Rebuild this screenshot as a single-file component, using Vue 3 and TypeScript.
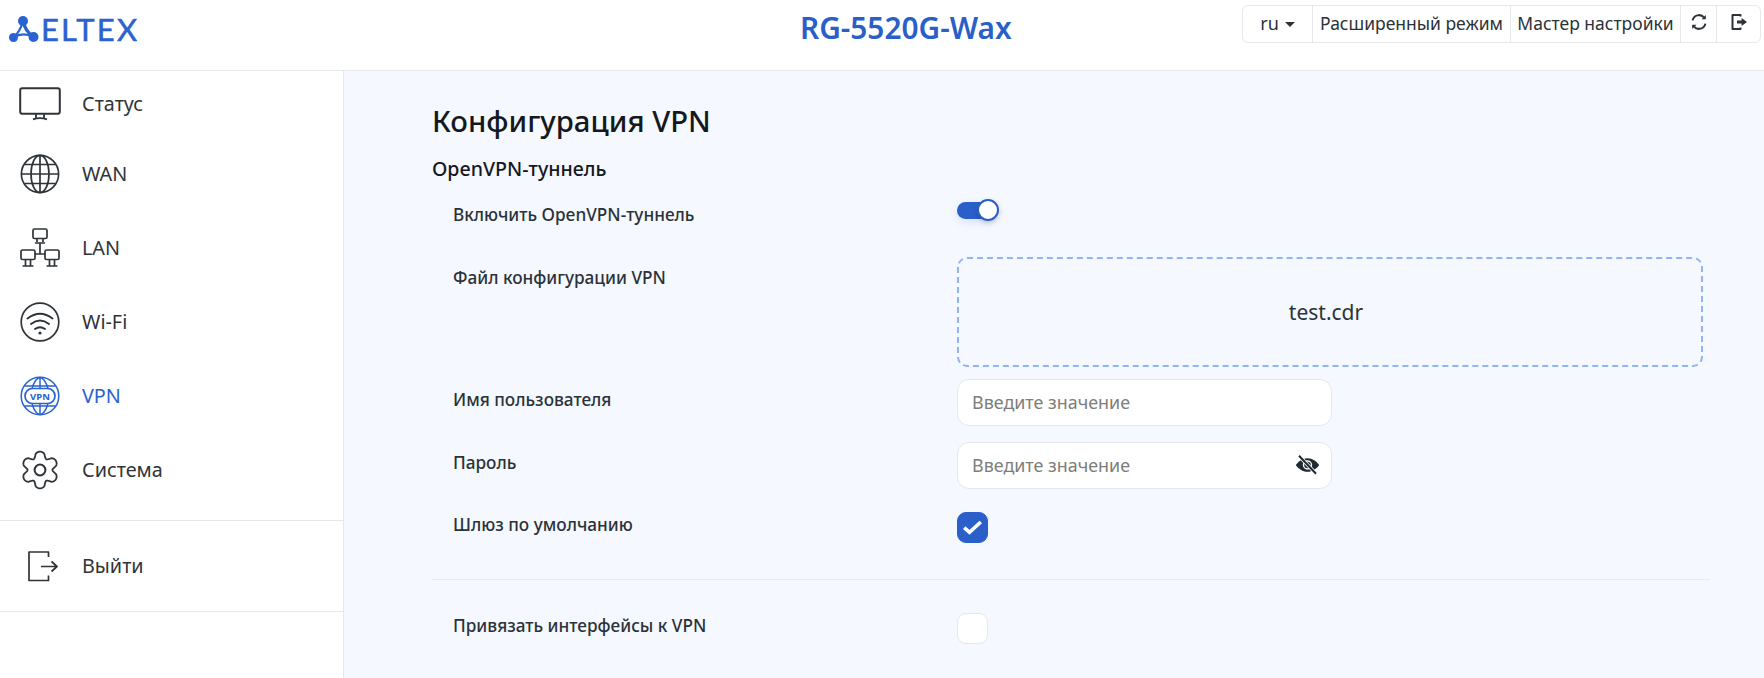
<template>
  <div class="page">
    <header class="topbar">
      <div class="logo">
        <svg class="logo-mark" width="30" height="28" viewBox="0 0 30 28">
          <path d="M14 6Q11 17 4.500 22.500" fill="none" stroke="#2a62cf" stroke-width="2.200" />
          <path d="M14 6Q16 16 24.500 22" fill="none" stroke="#2a62cf" stroke-width="3.400" />
          <path d="M4.500 22.500Q14 16.500 24.500 22" fill="none" stroke="#2a62cf" stroke-width="2.200" />
          <circle cx="14" cy="6" r="5" fill="#2a62cf" />
          <circle cx="4.500" cy="22.500" r="4.500" fill="#2a62cf" />
          <circle cx="24.500" cy="22" r="5" fill="#2a62cf" />
        </svg>
        <span class="logo-text">ELTEX</span>
      </div>
      <div class="device">RG-5520G-Wax</div>
      <div class="btn-group">
        <div class="btn lang">ru <i class="caret"></i></div>
        <div class="btn adv">Расширенный режим</div>
        <div class="btn wizard">Мастер настройки</div>
        <div class="btn ico reload">
          <svg width="18" height="18" viewBox="0 0 18 18" fill="none" stroke="#2b3238" stroke-width="2">
            <path d="M2.600 7.400A6.600 6.600 0 0 1 14 4.400" />
            <path d="M15.400 10.600A6.600 6.600 0 0 1 4 13.600" />
            <path d="M15.800 2v4.300h-4.300z" fill="#2b3238" stroke="none" />
            <path d="M2.200 16v-4.300h4.300z" fill="#2b3238" stroke="none" />
          </svg>
        </div>
        <div class="btn ico leave">
          <svg width="18" height="18" viewBox="0 0 18 18" fill="none">
            <path d="M10.500 3.500V2H2.500v14h8v-1.500" stroke="#2b3238" stroke-width="2" stroke-linejoin="round" />
            <path d="M7 7.600h4.600V4.900L17 9l-5.400 4.100v-2.700H7z" fill="#2b3238" />
          </svg>
        </div>
      </div>
    </header>

    <div class="body">
      <aside class="sidebar">
        <nav class="nav">
          <a class="nav-item">
            <svg class="icon" viewBox="0 0 40 40" fill="none" stroke="currentColor" stroke-width="1.8">
              <rect x="0.2" y="4.2" width="39.6" height="25.6" rx="2" stroke-width="2" />
              <path d="M16 30v4M24 30v4M13 35.4q7-2.4 14 0" />
            </svg>
            <span>Статус</span>
          </a>
          <a class="nav-item">
            <svg class="icon" viewBox="0 0 40 40" fill="none" stroke="currentColor" stroke-width="1.7">
              <circle cx="20" cy="20" r="18.6" />
              <ellipse cx="20" cy="20" rx="9" ry="18.6" />
              <path d="M20 1.4v37.2M1.4 20h37.2M4.4 10.5h31.2M4.4 29.5h31.2" />
            </svg>
            <span>WAN</span>
          </a>
          <a class="nav-item">
            <svg class="icon" viewBox="0 0 40 40" fill="none" stroke="currentColor" stroke-width="1.7">
              <rect x="13" y="1" width="14" height="9.5" rx="1.5" />
              <rect x="1" y="22" width="14" height="9.5" rx="1.5" />
              <rect x="25" y="22" width="14" height="9.5" rx="1.5" />
              <path d="M17 10.5v3.5M23 10.5v3.5M15 15h10M20 15v11M15 26h10" />
              <path d="M5.5 31.5v6M10.5 31.5v6M2.5 38h11M29.5 31.5v6M34.5 31.5v6M26.5 38h11" />
            </svg>
            <span>LAN</span>
          </a>
          <a class="nav-item">
            <svg class="icon" viewBox="0 0 40 40" fill="none" stroke="currentColor" stroke-width="1.7" stroke-linecap="round">
              <circle cx="20" cy="20" r="18.8" />
              <path d="M7.5 16.5q12.500-9.500 25 0M11 22q9-7 18 0M15 27q5-3.600 10 0" stroke-width="1.9" />
              <circle cx="20" cy="31" r="1.6" fill="currentColor" stroke="none" />
            </svg>
            <span>Wi-Fi</span>
          </a>
          <a class="nav-item active">
            <svg class="icon" viewBox="0 0 40 40" fill="none" stroke="currentColor" stroke-width="1.5">
              <circle cx="20" cy="20" r="18.8" />
              <path d="M4.500 10h31M4.500 30h31M20 1.400v11M20 27.500v11" />
              <path d="M12 12.500C14 5.500 17 1.800 20 1.400C23 1.800 26 5.500 28 12.500M12 27.500C14 34.500 17 38.200 20 38.600C23 38.200 26 34.500 28 27.500" />
              <rect x="5" y="12.500" width="30" height="15" rx="7.500" fill="#fff" stroke-width="1.700" />
              <text x="20" y="23.800" text-anchor="middle" class="vpn-mark">VPN</text>
            </svg>
            <span>VPN</span>
          </a>
          <a class="nav-item">
            <svg class="icon" viewBox="0 0 40 40" fill="none" stroke="currentColor" stroke-width="1.8">
              <path :d="gearPath" stroke-linejoin="round" />
              <circle cx="20" cy="20" r="5.400" stroke-width="2" />
            </svg>
            <span>Система</span>
          </a>
        </nav>
        <a class="nav-item exit">
          <svg class="icon" viewBox="0 0 40 40" fill="none" stroke="currentColor" stroke-width="1.7" stroke-linejoin="round">
            <path d="M28.500 11V6H9v28.500h19.500V29.500" />
            <path d="M21 20.500h15.500M31.500 15.500l5.500 5-5.500 5" />
          </svg>
          <span>Выйти</span>
        </a>
      </aside>

      <main class="content">
        <h1 class="title">Конфигурация VPN</h1>
        <h2 class="subtitle">OpenVPN-туннель</h2>

        <div class="row row-toggle">
          <label class="lbl">Включить OpenVPN-туннель</label>
          <div class="toggle"><span class="knob"></span></div>
        </div>

        <div class="row row-file">
          <label class="lbl">Файл конфигурации VPN</label>
          <div class="dropzone">test.cdr</div>
        </div>

        <div class="row row-input">
          <label class="lbl">Имя пользователя</label>
          <div class="field"><input class="input" type="text" placeholder="Введите значение" /></div>
        </div>

        <div class="row row-input row-pass">
          <label class="lbl">Пароль</label>
          <div class="field">
            <input class="input" type="password" placeholder="Введите значение" />
            <svg class="eye" width="25" height="20" viewBox="0 0 25 20">
              <path d="M12.500 3.200c-5 0-9 3-11.700 6.800 2.700 3.800 6.700 6.800 11.700 6.800s9-3 11.700-6.800C21.500 6.200 17.500 3.200 12.500 3.200z" fill="#1f2a30" />
              <circle cx="12.500" cy="10" r="4" fill="none" stroke="#f5f8ff" stroke-width="1.400" />
              <path d="M4 .8l17 18" stroke="#fff" stroke-width="3.600" />
              <path d="M4 .8l17 18" stroke="#1f2a30" stroke-width="2" />
            </svg>
          </div>
        </div>

        <div class="row row-check">
          <label class="lbl">Шлюз по умолчанию</label>
          <div class="check on">
            <svg width="19" height="15" viewBox="0 0 19 15" fill="none">
              <path d="M1.200 7.600l5.300 4.800L17.800 2" stroke="#fff" stroke-width="3.600" />
            </svg>
          </div>
        </div>

        <hr class="sep" />

        <div class="row row-check">
          <label class="lbl">Привязать интерфейсы к VPN</label>
          <div class="check"></div>
        </div>
      </main>
    </div>
  </div>
</template>

<script setup lang="ts">
// gear outline: six rounded lobes with a narrow notch between them
function buildGear(): string {
  const pts: string[] = []
  for (let i = 0; i < 240; i++) {
    const a = (i / 240) * Math.PI * 2
    const c = Math.cos(a * 6)
    const r = 17.2 + 2.6 * (c > -0.2 ? Math.pow((c + 0.2) / 1.2, 0.6) - 0.55 : (c + 0.2) * 1.6 - 0.55)
    const x = 20 + r * Math.sin(a)
    const y = 20 - r * Math.cos(a)
    pts.push(`${x.toFixed(2)} ${y.toFixed(2)}`)
  }
  return `M${pts.join('L')}Z`
}

const gearPath = buildGear()
</script>

<style>
html, body { margin: 0; background: #fff; }
</style>

<style scoped>
.page {
  height: 678px;
  overflow: hidden;
  display: flex;
  flex-direction: column;
  font-family: "Noto Sans", "Open Sans", sans-serif;
  color: #2b3238;
}

.topbar {
  height: 70px;
  flex: none;
  display: grid;
  grid-template-columns: 800px auto 1fr;
  align-items: start;
  background: #fff;
  border-bottom: 1px solid #e6e8ec;
}

.logo {
  display: flex;
  align-items: center;
  gap: 2px;
  padding: 14px 0 0 9px;
}
.logo-text {
  font-family: "Lato", sans-serif;
  font-size: 31px;
  line-height: 30px;
  font-weight: 400;
  letter-spacing: 2.200px;
  color: #2a62cf;
  -webkit-text-stroke: 0.5px #2a62cf;
}

.device {
  font-size: 29.800px;
  line-height: 38px;
  font-weight: 600;
  color: #2a5fc9;
  padding-top: 9px;
}

.btn-group {
  justify-self: end;
  margin: 5px 3px 0 0;
  height: 38px;
  display: flex;
  border: 1px solid #e6e8ec;
  border-radius: 6px;
  box-sizing: border-box;
  font-size: 17.500px;
}
.btn {
  display: flex;
  align-items: center;
  justify-content: center;
  box-sizing: border-box;
  border-right: 1px solid #e6e8ec;
  padding-bottom: 3px;
  white-space: nowrap;
}
.btn:last-child { border-right: none; }
.lang { width: 70px; gap: 6px; font-size: 18px; }
.caret {
  display: inline-block;
  border-left: 5px solid transparent;
  border-right: 5px solid transparent;
  border-top: 5px solid #2b3238;
  margin-top: 3px;
}
.adv { width: 198px; }
.wizard { width: 170px; }
.reload { width: 36px; padding-bottom: 4px; }
.leave { width: 43px; padding-bottom: 5px; }

.body {
  flex: 1;
  display: flex;
  min-height: 0;
}

.sidebar {
  width: 344px;
  flex: none;
  box-sizing: border-box;
  background: #fff;
  border-right: 1px solid #e6e8ef;
}
.nav {
  padding-bottom: 13px;
  border-bottom: 1px solid #e6e8ec;
}
.nav-item {
  height: 74px;
  display: flex;
  align-items: center;
  gap: 22px;
  padding-left: 20px;
  font-size: 19.800px;
  color: #2f3439;
}
.nav-item span { padding-bottom: 1px; }
.nav-item:first-child { height: 66px; }
.nav-item.active { color: #2a62cf; }
.nav-item.exit {
  height: 90px;
  border-bottom: 1px solid #e6e8ec;
}
.icon {
  width: 40px;
  height: 40px;
  flex: none;
  overflow: visible;
}
.vpn-mark {
  font-family: "Noto Sans", sans-serif;
  font-size: 9.500px;
  font-weight: 700;
  fill: currentColor;
  stroke: none;
}

.content {
  flex: 1;
  background: #f5f8ff;
  padding: 29px 54px 0 88px;
  min-width: 0;
}
.title {
  margin: 0;
  font-size: 29.300px;
  line-height: 42px;
  font-weight: 500;
  color: #15191d;
}
.subtitle {
  margin: 14px 0 16px;
  font-size: 19.600px;
  line-height: 26px;
  font-weight: 500;
  color: #15191d;
}

.row {
  display: grid;
  grid-template-columns: 504px 1fr;
  padding-left: 21px;
  align-items: start;
}
.lbl {
  margin-top: 1px;
  font-size: 17.200px;
  line-height: 24px;
  font-weight: 500;
  color: #2b3238;
}
.row-toggle { height: 28px; margin-bottom: 31px; }
.row-toggle .lbl { padding-top: 4px; }
.toggle {
  position: relative;
  width: 41px;
  height: 17px;
  margin-top: 4px;
  border-radius: 9px;
  background: #2a5fc9;
  box-shadow: 0 3px 8px rgba(42, 95, 201, 0.15);
}
.knob {
  position: absolute;
  top: -3px;
  right: -1px;
  width: 22px;
  height: 22px;
  box-sizing: border-box;
  border-radius: 50%;
  background: #fff;
  border: 2px solid #2a5fc9;
  box-shadow: 0 2px 5px rgba(0, 0, 0, 0.15);
}

.row-file { margin-bottom: 12px; }
.row-file .lbl { padding-top: 8px; }
.dropzone {
  height: 110px;
  width: 746px;
  box-sizing: border-box;
  border: 2px dashed #8fb5f3;
  border-radius: 10px;
  display: flex;
  align-items: center;
  justify-content: center;
  font-size: 21px;
  color: #2b3238;
  padding-right: 8px;
}

.row-input { margin-bottom: 16px; }
.row-input .lbl { padding-top: 8px; }
.row-pass { margin-bottom: 23px; }
.field {
  position: relative;
  width: 375px;
  height: 47px;
}
.input {
  width: 100%;
  height: 100%;
  box-sizing: border-box;
  border: 1px solid #e4e7ec;
  border-radius: 12px;
  background: #fff;
  padding: 0 14px 2px;
  font: 17.900px "Noto Sans", sans-serif;
  outline: none;
}
.input::placeholder { color: #7e7d78; opacity: 1; }
.eye {
  position: absolute;
  right: 12px;
  top: 13px;
}

.check {
  width: 31px;
  height: 31px;
  box-sizing: border-box;
  border: 1px solid #e4e7ec;
  border-radius: 9px;
  background: #fff;
  display: flex;
  align-items: center;
  justify-content: center;
}
.check.on {
  background: #2a5fc9;
  border-color: #2a5fc9;
}

.sep {
  margin: 36px 0 33px;
  border: none;
  border-top: 1px solid #e9ecf2;
}
</style>
